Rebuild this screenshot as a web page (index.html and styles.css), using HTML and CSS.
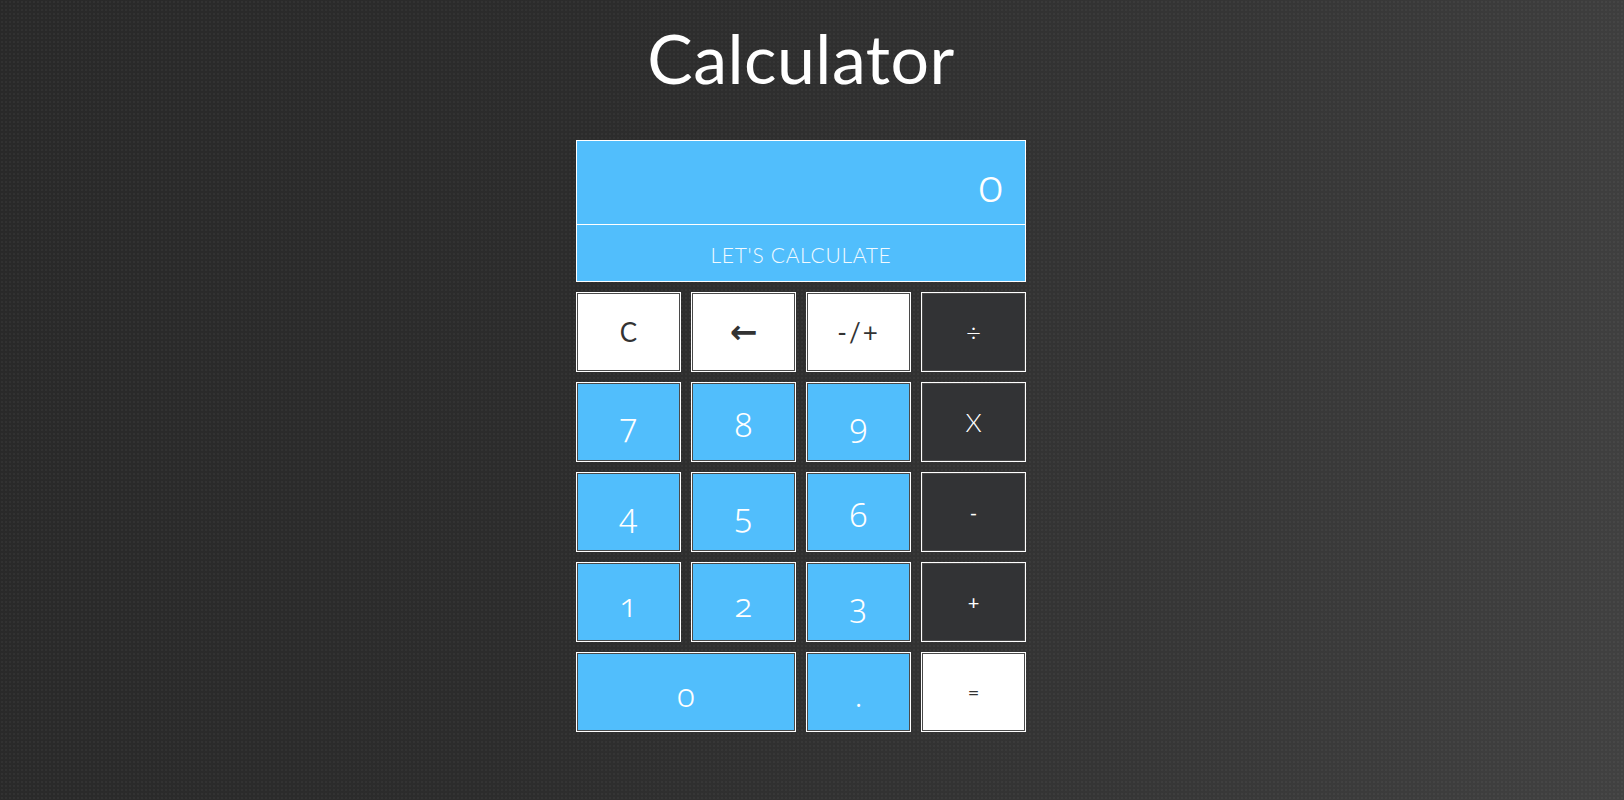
FILE: index.html
```html
<!DOCTYPE html>
<html lang="en">
<head>
  <meta charset="UTF-8" />
  <meta name="viewport" content="width=device-width, initial-scale=1" />
  <title>Calculator</title>
  <link rel="stylesheet" href="styles.css">
</head>
<body>

  <main class="page">
    <h1 class="title">Calculator</h1>

    <div class="calc">
      <div class="screen">
        <div class="screen-value" id="value">0</div>
        <div class="screen-note">LET'S CALCULATE</div>
      </div>

      <div class="keys">
        <button class="key light">C</button>
        <button class="key light arrow">&larr;</button>
        <button class="key light sign">-/+</button>
        <button class="key dark">&divide;</button>

        <button class="key num">7</button>
        <button class="key num">8</button>
        <button class="key num">9</button>
        <button class="key dark">X</button>

        <button class="key num">4</button>
        <button class="key num">5</button>
        <button class="key num">6</button>
        <button class="key dark small">-</button>

        <button class="key num">1</button>
        <button class="key num">2</button>
        <button class="key num">3</button>
        <button class="key dark small">+</button>

        <button class="key num wide">0</button>
        <button class="key num">.</button>
        <button class="key light small">=</button>
      </div>
    </div>
  </main>

</body>
</html>
```

FILE: styles.css
```css
html, body {
  height: 100%;
}
body {
  margin: 0;
  font-family: 'Lato', 'Noto Sans', sans-serif;
  color: white;
  background-color: #2d2d2d;
  background-image:
    radial-gradient(rgba(255, 255, 255, 0.035) 1px, transparent 1px),
    linear-gradient(100deg, #292929 0%, #2c2c2c 35%, #353535 70%, #414141 100%);
  background-size: 4px 4px, 100% 100%;
  overflow: hidden;
}
.page {
  display: flex;
  flex-direction: column;
  align-items: center;
  padding-right: 22px;
}
.title {
  margin: 24px 0 0;
  font-size: 68px;
  line-height: 1;
  font-weight: 400;
  letter-spacing: 0.5px;
}
.calc {
  width: 450px;
  margin-top: 48px;
}
.screen {
  background: #51befc;
  border: 1px solid white;
}
.screen-value {
  height: 84px;
  display: flex;
  align-items: center;
  justify-content: flex-end;
  padding: 2px 22px 0 0;
  box-sizing: border-box;
  font-family: 'Noto Sans', sans-serif;
  font-variant-numeric: oldstyle-nums;
  font-weight: 300;
  font-size: 46px;
  border-bottom: 1px solid white;
}
.screen-note {
  height: 56px;
  display: flex;
  align-items: center;
  justify-content: center;
  padding-top: 2px;
  box-sizing: border-box;
  font-size: 21px;
  font-weight: 300;
  letter-spacing: 0.7px;
  color: #f2faff;
}
.keys {
  display: grid;
  grid-template-columns: repeat(4, 1fr);
  grid-auto-rows: 80px;
  gap: 10px;
  margin-top: 10px;
}
.key {
  margin: 0;
  padding: 0;
  border: 1px solid white;
  box-shadow: inset 0 0 0 1px #4a4a4a;
  display: flex;
  align-items: center;
  justify-content: center;
  font-family: 'Lato', sans-serif;
  font-weight: 300;
  font-size: 26px;
  cursor: pointer;
}
.light {
  background: white;
  color: #333;
  font-weight: 400;
}
.dark {
  background: #323335;
  color: white;
}
.num {
  background: #51befc;
  color: white;
  font-family: 'Noto Sans', sans-serif;
  font-variant-numeric: oldstyle-nums;
  font-weight: 300;
  font-size: 33px;
  padding-top: 4px;
}
.wide {
  grid-column: span 2;
}
.arrow {
  font-family: 'DejaVu Sans', sans-serif;
  font-weight: 700;
  font-size: 33px;
  padding-bottom: 2px;
}
.sign {
  font-size: 26px;
  letter-spacing: 2px;
}
.small {
  font-size: 20px;
  font-weight: 400;
}
.key:hover {
  filter: brightness(0.95);
}
```
